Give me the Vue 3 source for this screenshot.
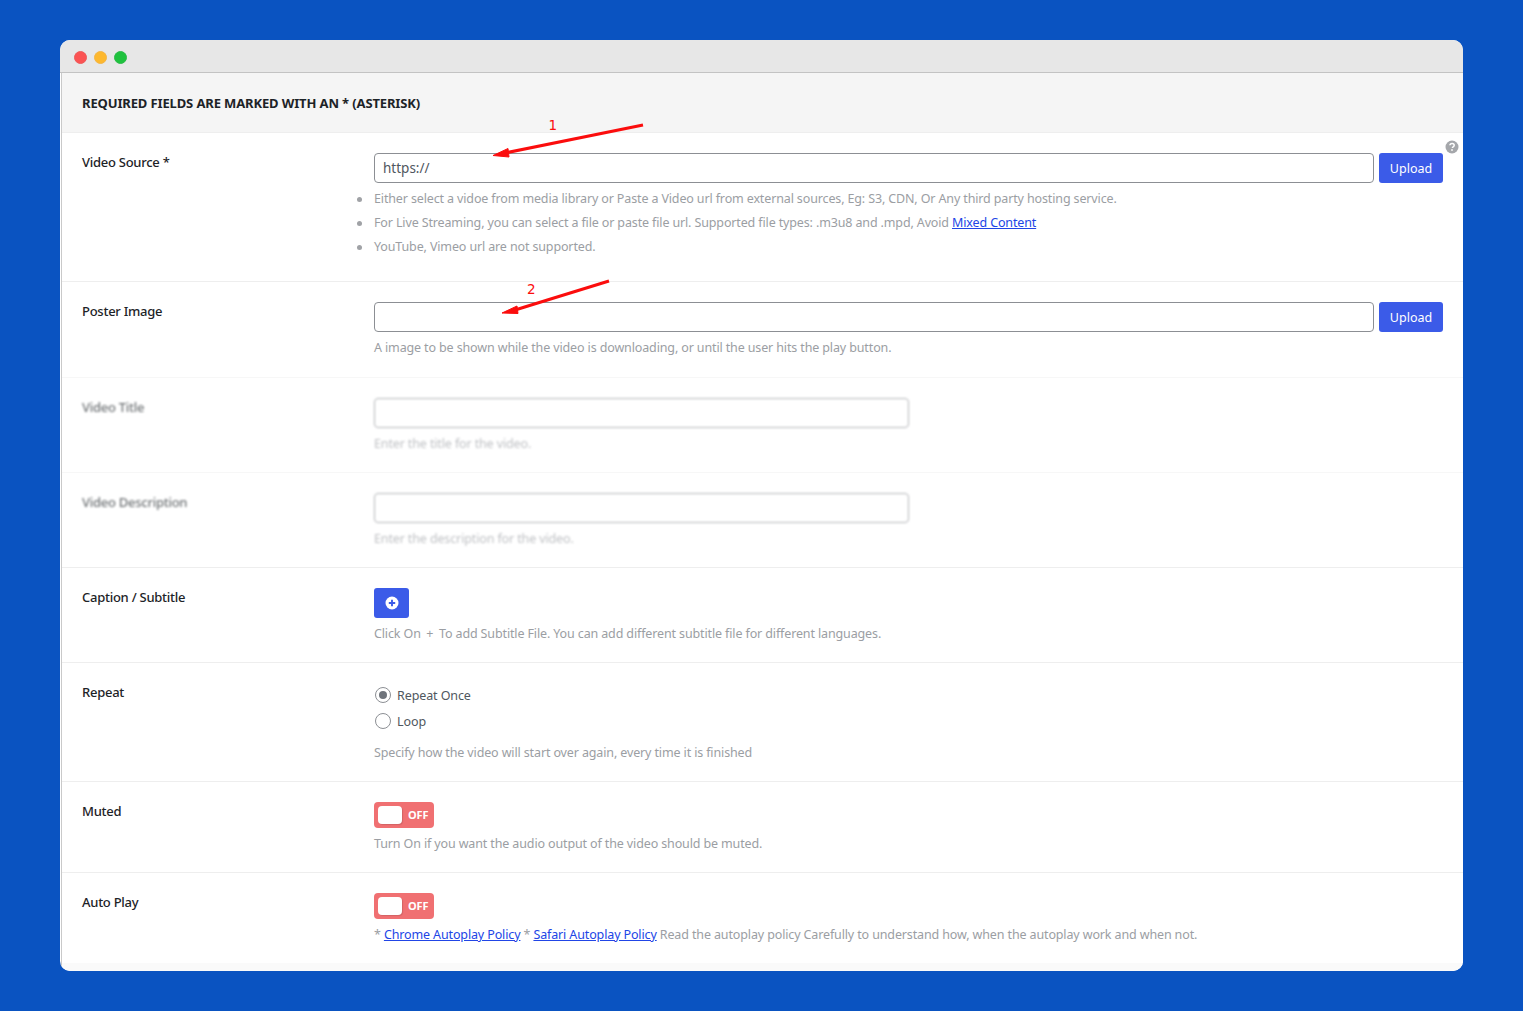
<script setup>
const sourceNotes = [
  'Either select a vidoe from media library or Paste a Video url from external sources, Eg: S3, CDN, Or Any third party hosting service.',
  'YouTube, Vimeo url are not supported.',
]
</script>

<template>
  <div class="page">
    <div class="window">
      <div class="titlebar">
        <span class="dot red"></span>
        <span class="dot yellow"></span>
        <span class="dot green"></span>
      </div>
      <div class="body">
        <div class="head">REQUIRED FIELDS ARE MARKED WITH AN * (ASTERISK)</div>

        <div class="row row-source">
          <label class="label">Video Source *</label>
          <div class="field">
            <div class="input-line">
              <input class="input" type="text" value="https://" />
              <button class="btn">Upload</button>
            </div>
            <ul class="notes">
              <li>{{ sourceNotes[0] }}</li>
              <li>For Live Streaming, you can select a file or paste file url. Supported file types: .m3u8 and .mpd, Avoid <a href="#">Mixed Content</a></li>
              <li>{{ sourceNotes[1] }}</li>
            </ul>
          </div>
          <svg class="help" viewBox="0 0 14 14" width="14" height="14">
            <circle cx="7" cy="7" r="6.5" fill="#a5a7ab" />
            <path d="M4.9 5.3c.1-1.2 1-1.9 2.2-1.9 1.2 0 2.1.7 2.1 1.8 0 .9-.5 1.3-1.1 1.7-.5.3-.7.6-.7 1.1" fill="none" stroke="#fff" stroke-width="1.5" />
            <rect x="6.2" y="9.2" width="1.6" height="1.6" fill="#fff" />
          </svg>
        </div>

        <div class="row row-poster">
          <label class="label">Poster Image</label>
          <div class="field">
            <div class="input-line">
              <input class="input" type="text" />
              <button class="btn">Upload</button>
            </div>
            <p class="hint">A image to be shown while the video is downloading, or until the user hits the play button.</p>
          </div>
        </div>

        <div class="row row-blur row-faint">
          <label class="label">Video Title</label>
          <div class="field">
            <input class="input short" type="text" />
            <p class="hint">Enter the title for the video.</p>
          </div>
        </div>

        <div class="row row-blur">
          <label class="label">Video Description</label>
          <div class="field">
            <input class="input short" type="text" />
            <p class="hint">Enter the description for the video.</p>
          </div>
        </div>

        <div class="row">
          <label class="label">Caption / Subtitle</label>
          <div class="field">
            <button class="btn btn-add">
              <svg viewBox="0 0 14 14" width="14" height="14">
                <circle cx="7" cy="7" r="6.5" fill="#fff" />
                <path d="M7 3.8v6.4M3.8 7h6.4" stroke="#3b5be8" stroke-width="1.9" />
              </svg>
            </button>
            <p class="hint">Click On <span class="plus">+</span> To add Subtitle File. You can add different subtitle file for different languages.</p>
          </div>
        </div>

        <div class="row row-repeat">
          <label class="label">Repeat</label>
          <div class="field">
            <div class="radios">
              <label class="radio"><span class="circle on"></span>Repeat Once</label>
              <label class="radio"><span class="circle"></span>Loop</label>
            </div>
            <p class="hint">Specify how the video will start over again, every time it is finished</p>
          </div>
        </div>

        <div class="row row-switch">
          <label class="label">Muted</label>
          <div class="field">
            <div class="switch"><span class="knob"></span><span class="off">OFF</span></div>
            <p class="hint">Turn On if you want the audio output of the video should be muted.</p>
          </div>
        </div>

        <div class="row row-switch">
          <label class="label">Auto Play</label>
          <div class="field">
            <div class="switch"><span class="knob"></span><span class="off">OFF</span></div>
            <p class="hint">* <a href="#">Chrome Autoplay Policy</a> * <a href="#">Safari Autoplay Policy</a> Read the autoplay policy Carefully to understand how, when the autoplay work and when not.</p>
          </div>
        </div>
      </div>

      <!-- hand drawn annotations on top of the form -->
      <svg class="marks" viewBox="0 0 1403 931" width="1403" height="931">
        <path d="M583 85 L445 113" fill="none" stroke="#fb0d0d" stroke-width="3" />
        <path d="M433 115.5 L448 108.5 L449 117 Z" fill="#fb0d0d" stroke="#fb0d0d" stroke-linejoin="round" />
        <path d="M549 241 L455 270" fill="none" stroke="#fb0d0d" stroke-width="3" />
        <path d="M442 273 L457 266 L458 273.5 Z" fill="#fb0d0d" stroke="#fb0d0d" stroke-linejoin="round" />
        <text x="488.5" y="90">1</text>
        <text x="467" y="254">2</text>
      </svg>
    </div>
  </div>
</template>

<style scoped>
.page {
  width: 1523px;
  height: 1011px;
  padding: 40px 60px;
  box-sizing: border-box;
  background: #0a53c1;
  font-family: "Noto Sans", sans-serif;
}
.window {
  position: relative;
  height: 931px;
  background: #fff;
  border-radius: 10px;
  overflow: hidden;
  display: flex;
  flex-direction: column;
}
.titlebar {
  flex: none;
  height: 30px;
  padding: 2px 0 0 13.5px;
  box-sizing: content-box;
  display: flex;
  align-items: center;
  gap: 7px;
  background: #e7e7e7;
  border-bottom: 1px solid #c3c3c3;
}
.dot {
  width: 13px;
  height: 13px;
  box-sizing: border-box;
  border-radius: 50%;
}
.red { background: #fb5353; border: 1px solid #ee5a5a; }
.yellow { background: #fdb82e; border: 1px solid #f3b545; }
.green { background: #1fc23e; border: 1px solid #2cbb49; }
.body {
  flex: 1;
  margin-left: 1px;
  border-left: 1px solid #c9c9c9;
  background: #fafafa;
}
.head {
  height: 60px;
  padding-left: 20px;
  line-height: 60px;
  box-sizing: border-box;
  background: #f5f5f5;
  border-bottom: 1px solid #eeeeee;
  font-size: 13px;
  font-weight: 700;
  color: #1d2327;
  letter-spacing: -0.13px;
}
.row {
  position: relative;
  display: flex;
  height: 95px;
  padding: 20px 20px 0 20px;
  box-sizing: border-box;
  background: #fff;
  border-bottom: 1px solid #eeeeee;
}
.row-source { height: 149px; }
.row-poster { height: 96px; border-bottom-color: #f7f7f7; }
.row-repeat { height: 119px; }
.row-switch { height: 91px; }
.row-switch:last-child { height: 90px; border-bottom: 0; }
.row-faint { border-bottom-color: #f7f7f7; }
.row-blur .label,
.row-blur .input,
.row-blur .hint {
  filter: blur(0.9px);
  opacity: 0.65;
}
.label {
  flex: none;
  width: 292px;
  font-size: 13px;
  line-height: 18px;
  font-weight: 500;
  letter-spacing: -0.26px;
  color: #1d2327;
}
.field {
  flex: 1;
  min-width: 0;
}
.input-line {
  display: flex;
  gap: 5px;
}
.input {
  display: block;
  flex: 1;
  width: 100%;
  height: 30px;
  padding: 0 8px;
  box-sizing: border-box;
  border: 1px solid #8c8f94;
  border-radius: 4px;
  background: #fff;
  font: 13.5px "Noto Sans", sans-serif;
  color: #50575e;
  outline: none;
}
.short { width: 535px; flex: none; }
.btn {
  flex: none;
  width: 64px;
  height: 30px;
  padding: 0;
  border: 0;
  border-radius: 3px;
  background: #3b5be8;
  color: #fff;
  font: 12.5px "Noto Sans", sans-serif;
}
.btn-add {
  display: flex;
  align-items: center;
  justify-content: center;
  width: 35px;
}
.notes {
  margin: 0;
  padding: 0;
  list-style: none;
}
.notes li {
  position: relative;
  height: 24px;
  font-size: 12.5px;
  line-height: 24px;
  letter-spacing: -0.135px;
  color: #9b9ea3;
}
.notes li:first-child { margin-top: 4px; }
.notes li::before {
  content: "";
  position: absolute;
  left: -17px;
  top: 10px;
  width: 5px;
  height: 5px;
  border-radius: 50%;
  background: #a0a2a6;
}
.hint {
  margin: 7px 0 0;
  font-size: 12.5px;
  line-height: 18px;
  letter-spacing: -0.13px;
  color: #9b9ea3;
}
.plus {
  margin: 0 2.5px;
}
a {
  color: #2145e6;
  text-decoration: underline;
}
.help {
  position: absolute;
  top: 7px;
  right: 4px;
}
.radios {
  margin-top: -1px;
  padding-bottom: 3px;
}
.radio {
  display: flex;
  align-items: center;
  gap: 6px;
  height: 26px;
  margin-left: 1px;
  font-size: 12.5px;
  letter-spacing: -0.1px;
  color: #50575e;
}
.circle {
  width: 16px;
  height: 16px;
  box-sizing: border-box;
  border: 1px solid #8c8f94;
  border-radius: 50%;
  background: #fff;
  display: flex;
  align-items: center;
  justify-content: center;
}
.circle.on::after {
  content: "";
  width: 8px;
  height: 8px;
  border-radius: 50%;
  background: #6f747b;
}
.switch {
  position: relative;
  width: 60px;
  height: 26px;
  border-radius: 4px;
  background: #f07072;
}
.knob {
  position: absolute;
  left: 4px;
  top: 4px;
  width: 24px;
  height: 18px;
  border-radius: 4px;
  background: #fff;
  box-shadow: 1px 1px 1px rgba(0, 0, 0, 0.12);
}
.off {
  position: absolute;
  left: 34px;
  top: 0;
  font-size: 11px;
  font-weight: 700;
  line-height: 26px;
  letter-spacing: -0.1px;
  color: #fff;
}
.marks {
  position: absolute;
  left: 0;
  top: 0;
  pointer-events: none;
}
.marks text {
  font: 13.5px "DejaVu Sans", sans-serif;
  fill: #fb0d0d;
}
</style>

<style>
html, body { margin: 0; background: #0a53c1; }
</style>
